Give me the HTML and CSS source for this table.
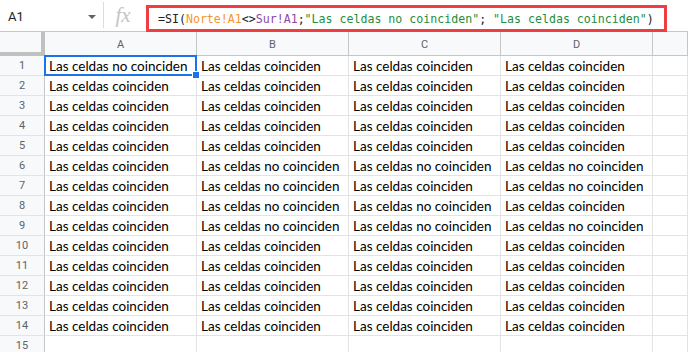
FILE: index.html
```html
<!DOCTYPE html>
<html>
<head>
<meta charset="utf-8">
<link rel="stylesheet" href="styles.css">
</head>
<body>
<div class="bar">
  <div class="namebox"><span class="ref">A1</span><span class="caret"></span></div>
  <div class="sep"></div>
  <div class="fx">fx</div>
  <div class="formula"><span class="d">=SI(</span><span class="o">Norte!A1</span><span class="d">&lt;&gt;</span><span class="p">Sur!A1</span><span class="d">;</span><span class="g">"Las celdas no coinciden"</span><span class="d">; </span><span class="g">"Las celdas coinciden"</span><span class="d">)</span></div>
</div>
<div class="sheet">
  <div class="corner"></div><div class="ch">A</div><div class="ch">B</div><div class="ch">C</div><div class="ch">D</div><div class="ch last"></div>
  <div class="rh">1</div><div class="c sel">Las celdas no coinciden<span class="handle"></span></div><div class="c">Las celdas coinciden</div><div class="c">Las celdas coinciden</div><div class="c">Las celdas coinciden</div><div class="c"></div>
  <div class="rh">2</div><div class="c">Las celdas coinciden</div><div class="c">Las celdas coinciden</div><div class="c">Las celdas coinciden</div><div class="c">Las celdas coinciden</div><div class="c"></div>
  <div class="rh">3</div><div class="c">Las celdas coinciden</div><div class="c">Las celdas coinciden</div><div class="c">Las celdas coinciden</div><div class="c">Las celdas coinciden</div><div class="c"></div>
  <div class="rh">4</div><div class="c">Las celdas coinciden</div><div class="c">Las celdas coinciden</div><div class="c">Las celdas coinciden</div><div class="c">Las celdas coinciden</div><div class="c"></div>
  <div class="rh">5</div><div class="c">Las celdas coinciden</div><div class="c">Las celdas coinciden</div><div class="c">Las celdas coinciden</div><div class="c">Las celdas coinciden</div><div class="c"></div>
  <div class="rh">6</div><div class="c">Las celdas coinciden</div><div class="c">Las celdas no coinciden</div><div class="c">Las celdas no coinciden</div><div class="c">Las celdas no coinciden</div><div class="c"></div>
  <div class="rh">7</div><div class="c">Las celdas coinciden</div><div class="c">Las celdas no coinciden</div><div class="c">Las celdas coinciden</div><div class="c">Las celdas no coinciden</div><div class="c"></div>
  <div class="rh">8</div><div class="c">Las celdas coinciden</div><div class="c">Las celdas no coinciden</div><div class="c">Las celdas no coinciden</div><div class="c">Las celdas coinciden</div><div class="c"></div>
  <div class="rh">9</div><div class="c">Las celdas coinciden</div><div class="c">Las celdas no coinciden</div><div class="c">Las celdas no coinciden</div><div class="c">Las celdas no coinciden</div><div class="c"></div>
  <div class="rh">10</div><div class="c">Las celdas coinciden</div><div class="c">Las celdas coinciden</div><div class="c">Las celdas coinciden</div><div class="c">Las celdas coinciden</div><div class="c"></div>
  <div class="rh">11</div><div class="c">Las celdas coinciden</div><div class="c">Las celdas coinciden</div><div class="c">Las celdas coinciden</div><div class="c">Las celdas coinciden</div><div class="c"></div>
  <div class="rh">12</div><div class="c">Las celdas coinciden</div><div class="c">Las celdas coinciden</div><div class="c">Las celdas coinciden</div><div class="c">Las celdas coinciden</div><div class="c"></div>
  <div class="rh">13</div><div class="c">Las celdas coinciden</div><div class="c">Las celdas coinciden</div><div class="c">Las celdas coinciden</div><div class="c">Las celdas coinciden</div><div class="c"></div>
  <div class="rh">14</div><div class="c">Las celdas coinciden</div><div class="c">Las celdas coinciden</div><div class="c">Las celdas coinciden</div><div class="c">Las celdas coinciden</div><div class="c"></div>
  <div class="rh">15</div><div class="c"></div><div class="c"></div><div class="c"></div><div class="c"></div><div class="c"></div>
</div>
</body>
</html>
```
FILE: styles.css
```css
html, body { margin: 0; padding: 0; background: #fff; }
body { width: 688px; height: 352px; overflow: hidden; font-family: Roboto, "Liberation Sans", sans-serif; }

.bar { height: 31px; display: flex; align-items: stretch; background: #fff; }
.namebox { width: 103px; display: flex; align-items: center; justify-content: space-between; padding: 0 8px 0 8px; box-sizing: border-box; }
.ref { font-size: 13px; color: #202124; padding-top: 2px; }
.caret { width: 0; height: 0; border-left: 4px solid transparent; border-right: 4px solid transparent; border-top: 4px solid #5f6368; margin-top: 3px; margin-right: -1px; }
.sep { width: 1px; background: #dadce0; margin: 2px 0 3px; }
.fx { width: 42px; display: flex; align-items: center; justify-content: center; font-family: "Liberation Serif", serif; font-style: italic; font-size: 21px; color: #c4c4c4; padding-right: 4px; box-sizing: border-box; }
.formula { margin: 5px 0 -1px 0; width: 521px; box-sizing: border-box; border: 3px solid #ef3e42; display: flex; align-items: center; padding-left: 9px; font-family: "DejaVu Sans Mono", monospace; font-size: 11.6px; white-space: pre; }
.d { color: #202124; }
.o { color: #f4962b; }
.p { color: #8e47a6; }
.g { color: #1e8e3e; }

.sheet { display: grid; grid-template-columns: 45px 152px 152px 152px 152px 1fr; grid-template-rows: 24px; grid-auto-rows: 20px; border-top: 1px solid #c4c7c5; }
.corner { background: #f8f9fa; border-right: 4px solid #c0c0c0; border-bottom: 4px solid #c0c0c0; box-sizing: border-box; }
.ch { background: #f8f9fa; border-right: 1px solid #c4c7c5; border-bottom: 1px solid #c4c7c5; box-sizing: border-box; display: flex; align-items: center; justify-content: center; font-size: 11px; color: #5f6368; padding-top: 1px; }
.rh { background: #f8f9fa; border-right: 1px solid #c4c7c5; border-bottom: 1px solid #e2e3e3; box-sizing: border-box; display: flex; align-items: center; justify-content: center; font-size: 11px; color: #5f6368; }
.c { border-right: 1px solid #e2e3e3; border-bottom: 1px solid #e2e3e3; box-sizing: border-box; font-family: Lato, "Liberation Sans", sans-serif; font-size: 13.5px; color: #000; padding: 2px 0 0 4px; white-space: nowrap; overflow: visible; line-height: 16px; }
.sel { position: relative; }
.sel::before { content: ""; position: absolute; left: -1px; top: -1px; right: -1px; bottom: -1px; border: 2px solid #1a73e8; pointer-events: none; }
.handle { position: absolute; right: -4px; bottom: -4px; width: 6px; height: 6px; background: #1a73e8; border: 1px solid #fff; z-index: 2; }
```
